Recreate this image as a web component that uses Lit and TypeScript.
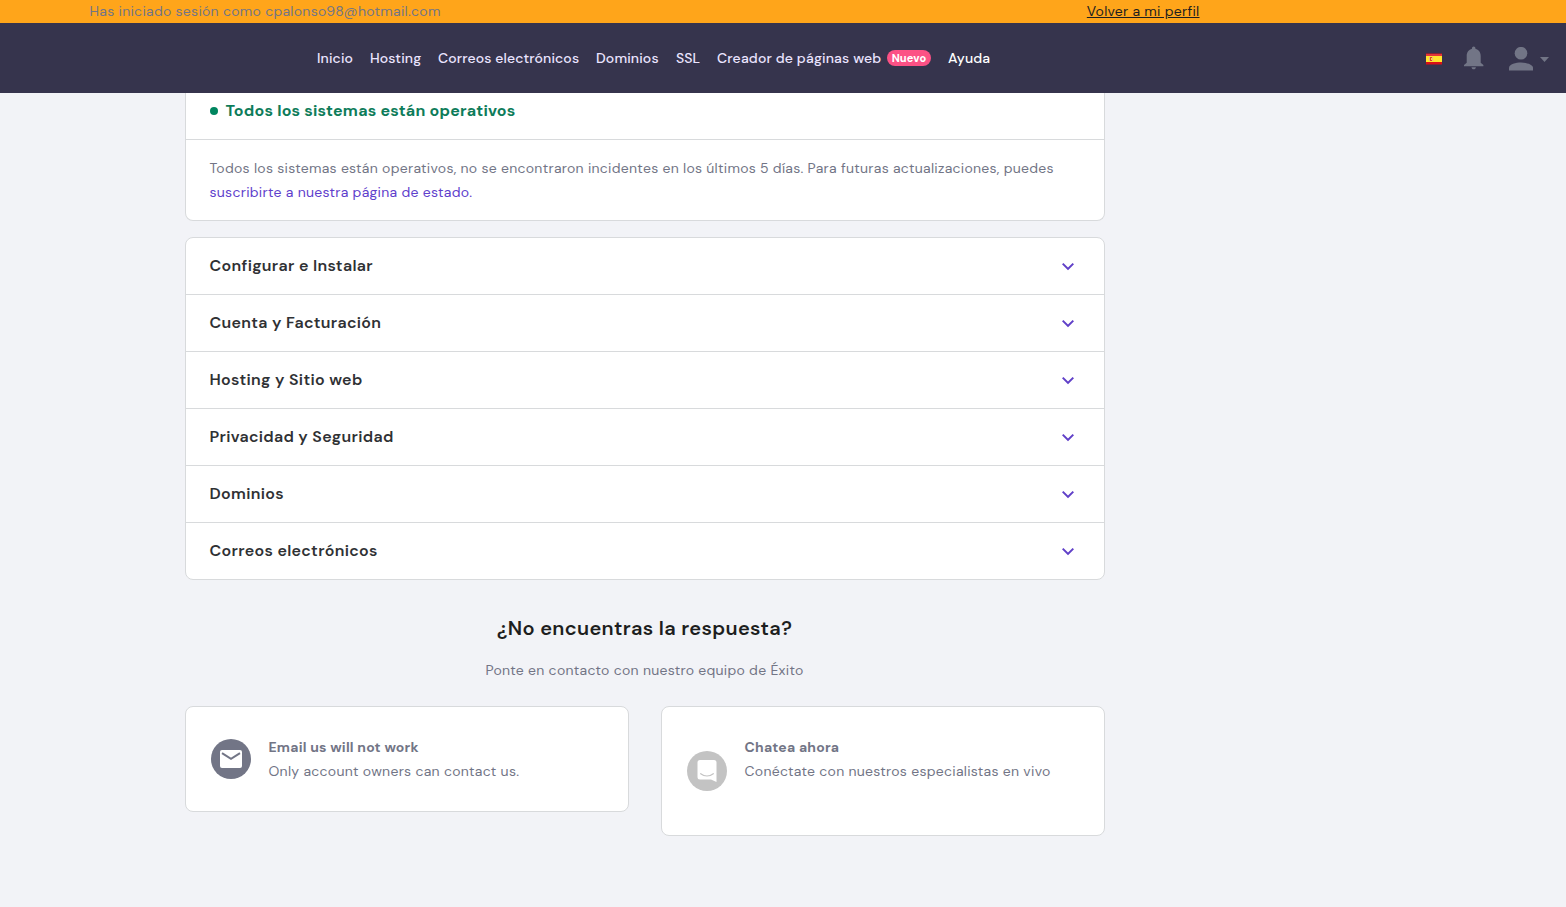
import { LitElement, html, css, svg } from "lit";
import { customElement } from "lit/decorators.js";

const topics = [
  "Configurar e Instalar",
  "Cuenta y Facturación",
  "Hosting y Sitio web",
  "Privacidad y Seguridad",
  "Dominios",
  "Correos electrónicos",
];

const chevron = svg`<path d="M1.41 1 6 5.400 10.59 1 12 2.300 6 8.200 0 2.300z" fill="#6040c8"/>`;

@customElement("app-root")
export class AppRoot extends LitElement {
  static styles = css`
    :host {
      display: block;
      height: 907px;
      overflow: hidden;
      background: #f2f3f7;
      font-family: "DM Sans", Inter, "Liberation Sans", sans-serif;
      font-size: 14px;
      line-height: 24px;
      letter-spacing: 0.278px;
      color: #727586;
    }
    * { box-sizing: border-box; }
    svg { display: block; flex: none; }
    span, a { white-space: nowrap; }
    .impersonation {
      height: 23px;
      display: flex;
      justify-content: space-between;
      padding: 0 366.500px 0 89.500px;
      background: #ffa51a;
      line-height: 23px;
    }
    .back { color: #1d1e20; text-decoration: underline; letter-spacing: 0.27px; }
    .header {
      height: 70px;
      background: #36344d;
      display: flex;
      align-items: center;
      justify-content: space-between;
      padding: 0 17px 0 317px;
    }
    .nav { display: flex; align-items: center; gap: 17px; color: #ebe4ff; font-weight: 500; letter-spacing: 0.14px; }
    .w1 { width: 36px; } .w2 { width: 51px; } .w3 { width: 141px; }
    .w4 { width: 63px; } .w5 { width: 24px; letter-spacing: 0; } .w7 { width: 42px; color: #fff; }
    .builder { display: flex; align-items: center; gap: 6px; }
    .w6 { width: 164px; letter-spacing: 0.17px; }
    .badge {
      width: 44px;
      height: 16px;
      border-radius: 8px;
      background: #fc5185;
      color: #fff;
      font-size: 11px;
      font-weight: 800;
      line-height: 16px;
      text-align: center;
      letter-spacing: 0.1px;
    }
    .tools { display: flex; align-items: center; }
    .flag { margin-top: 2px; }
    .bell { margin: 0 25px 0 22px; }
    .user { margin-top: 1px; }
    .caret { margin: 2px 0 0 7px; }
    .page { width: 920px; margin-left: 185px; }
    .card { background: #fff; border: 1px solid #d8dadc; border-radius: 8px; }
    .status { border-top: 0; border-radius: 0 0 8px 8px; height: 128px; }
    .operational {
      height: 47px;
      border-bottom: 1px solid #d8dadc;
      display: flex;
      align-items: center;
      gap: 7.500px;
      padding: 0 24px 10px;
      font-size: 16px;
      font-weight: 700;
      letter-spacing: 0.21px;
      color: #0e7c5a;
    }
    .dot { width: 8px; height: 8px; border-radius: 50%; background: #00855f; }
    .copy { padding: 16px 23.500px 0; display: flex; flex-direction: column; }
    .link { color: #6040cc; }
    .topics { margin-top: 16px; }
    .topic {
      height: 57px;
      display: flex;
      align-items: center;
      justify-content: space-between;
      padding: 0 30px 0 23.500px;
      border-bottom: 1px solid #d8dadc;
      color: #2f3134;
      font-size: 16px;
      font-weight: 600;
      letter-spacing: 0.32px;
    }
    .topic:last-child { border-bottom: 0; height: 56px; }
    .question { margin-top: 32px; padding-right: 1px; text-align: center; font-size: 20px; line-height: 32px; font-weight: 600; color: #1d1e20; letter-spacing: 0.33px; }
    .prompt { margin-top: 14px; padding-right: 1px; text-align: center; }
    .contacts { margin-top: 24px; display: flex; align-items: flex-start; gap: 32px; }
    .contact { width: 444px; height: 106px; display: flex; align-items: center; gap: 17.500px; padding: 0 25px; }
    .chat { height: 130px; }
    .lines { display: flex; flex-direction: column; }
    .chat .lines { padding-bottom: 24px; }
    .name { font-weight: 700; letter-spacing: 0.21px; }
  `;

  render() {
    return html`
      <div class="impersonation">
        <span>Has iniciado sesión como cpalonso98@hotmail.com</span>
        <a class="back">Volver a mi perfil</a>
      </div>
      <header class="header">
        <nav class="nav">
          <span class="w1">Inicio</span>
          <span class="w2">Hosting</span>
          <span class="w3">Correos electrónicos</span>
          <span class="w4">Dominios</span>
          <span class="w5">SSL</span>
          <div class="builder"><span class="w6">Creador de páginas web</span><span class="badge">Nuevo</span></div>
          <span class="w7">Ayuda</span>
        </nav>
        <div class="tools">
          <svg class="flag" width="16" height="12" viewBox="0 0 16 12">
            <path d="M0 .5h16v11H0z" fill="#d91018"/>
            <path d="M0 1.5h16v1H0z" fill="#ee5a5a"/>
            <path d="M0 3h16v6H0z" fill="#ffe52e"/>
            <path d="M3 4h1v4H3zM6 4h1v4H6z" fill="#efb08c"/>
            <path d="M4 4h2v1H5v2h1v1H4z" fill="#d9472a"/>
          </svg>
          <svg class="bell" width="20" height="24" viewBox="0 0 20 24">
            <path d="M9.700 0.5c1 0 1.700.8 1.700 1.800v.5c3.300.8 5.300 3.600 5.300 7.100v6.800L19.400 19v1.300H0V19l2.700-2.300V9.900c0-3.500 2-6.300 5.300-7.100v-.5c0-1 .7-1.800 1.700-1.800zM7.500 21.200h4.400c0 1.200-1 2.100-2.200 2.100s-2.200-.9-2.200-2.100z" fill="#727586"/>
          </svg>
          <svg class="user" width="24" height="24" viewBox="0 0 24 24">
            <circle cx="12" cy="6.200" r="6.300" fill="#727586"/>
            <path d="M0 23.500v-2.700c0-3.500 7-5.300 12-5.300s12 1.800 12 5.300v2.700z" fill="#727586"/>
          </svg>
          <svg class="caret" width="9" height="5" viewBox="0 0 9 5"><path d="M0 0h9L4.500 5z" fill="#727586"/></svg>
        </div>
      </header>
      <main class="page">
        <section class="card status">
          <div class="operational"><i class="dot"></i><span>Todos los sistemas están operativos</span></div>
          <div class="copy">
            <span>Todos los sistemas están operativos, no se encontraron incidentes en los últimos 5 días. Para futuras actualizaciones, puedes</span>
            <a class="link">suscribirte a nuestra página de estado.</a>
          </div>
        </section>
        <section class="card topics">
          ${topics.map((t) => html`<div class="topic"><span>${t}</span>
            <svg width="12" height="9" viewBox="0 0 12 9">${chevron}</svg></div>`)}
        </section>
        <div class="question">¿No encuentras la respuesta?</div>
        <div class="prompt">Ponte en contacto con nuestro equipo de Éxito</div>
        <div class="contacts">
          <div class="card contact">
            <svg width="40" height="40" viewBox="0 0 40 40">
              <circle cx="20" cy="20" r="20" fill="#727586"/>
              <rect x="9" y="11" width="22" height="18" rx="2" fill="#fff"/>
              <path d="M11 14.200 20 19.800l9-5.600" fill="none" stroke="#727586" stroke-width="2"/>
            </svg>
            <div class="lines"><span class="name">Email us will not work</span><span>Only account owners can contact us.</span></div>
          </div>
          <div class="card contact chat">
            <svg width="40" height="40" viewBox="0 0 40 40">
              <circle cx="20" cy="20" r="20" fill="#c3c3c3"/>
              <path d="M13 9h14a2.500 2.500 0 0 1 2.500 2.500V31l-5.500-2.500H13a2.500 2.500 0 0 1-2.500-2.500V11.500A2.500 2.500 0 0 1 13 9z" fill="#fff"/>
              <path d="M13.700 22.700c3.800 3 8.800 3 12.600 0" fill="none" stroke="#c3c3c3" stroke-width="1.200" stroke-linecap="round"/>
            </svg>
            <div class="lines"><span class="name">Chatea ahora</span><span>Conéctate con nuestros especialistas en vivo</span></div>
          </div>
        </div>
      </main>
    `;
  }
}
